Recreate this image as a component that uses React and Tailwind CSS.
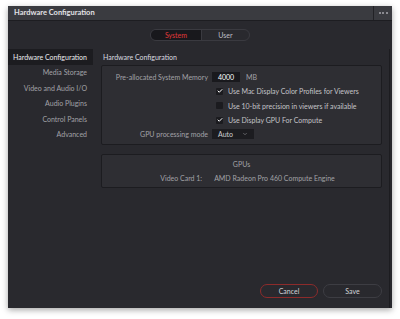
import { Check, ChevronDown } from "lucide-react"

const navItems = [
  "Hardware Configuration",
  "Media Storage",
  "Video and Audio I/O",
  "Audio Plugins",
  "Control Panels",
  "Advanced",
]

const CheckRow = ({ checked, label }) => (
  <div className="flex items-center h-[14.5px]">
    <div className="w-[7px] h-[7px] rounded-[1px] bg-[#1b1b1f] flex items-center justify-center">
      {checked && <Check className="w-[6px] h-[6px] text-white" strokeWidth={4} />}
    </div>
    <span className="ml-[5px] text-[#c4c4c8]">{label}</span>
  </div>
)

export default function App() {
  return (
    <div
      className="w-[400px] h-[319px] bg-white pt-[6px] pl-[8px] overflow-hidden"
      style={{ fontFamily: "Lato, 'Liberation Sans', sans-serif" }}
    >
      <div className="w-[384px] h-[302px] bg-[#29292e] flex flex-col shadow-[0_2px_6px_rgba(0,0,0,0.35)] text-[7px]">
        {/* Title bar */}
        <div className="h-[15px] flex bg-[#3a3b40] border-b border-[#1d1d21]">
          <div className="flex-1 flex items-center pl-[6px] text-[7.5px] font-bold text-[#e2e2e6]">
            Hardware Configuration
          </div>
          <div className="w-[19px] border-l border-[#222226] flex items-center justify-center gap-[1.5px]">
            <span className="w-[2px] h-[2px] bg-[#8a8a90]" />
            <span className="w-[2px] h-[2px] bg-[#8a8a90]" />
            <span className="w-[2px] h-[2px] bg-[#8a8a90]" />
          </div>
        </div>

        {/* Tabs */}
        <div className="flex justify-center pt-[8px]">
          <div className="flex w-[100px] h-[12px] rounded-full border border-[#3a3a40] overflow-hidden">
            <div className="w-[50px] bg-[#18181c] flex items-center justify-center text-[#e0393a]">System</div>
            <div className="flex-1 flex items-center justify-center text-[#bfbfc4] border-l border-[#3a3a40]">User</div>
          </div>
        </div>

        <div className="flex flex-1 pt-[8px]">
          {/* Sidebar */}
          <nav className="w-[85px] flex flex-col">
            {navItems.map((item, i) => (
              <div
                key={item}
                className={`h-[15.5px] flex items-center justify-end pr-[6px] ${
                  i === 0 ? "bg-[#1c1c20] text-[#ececf0]" : "text-[#a2a2a7]"
                }`}
              >
                {item}
              </div>
            ))}
          </nav>

          {/* Content */}
          <div className="flex-1 ml-[2px] mr-[2px] border-r border-[#1c1c20] flex flex-col pl-[6px] pr-[7px]">
            <div className="h-[16px] flex items-center pt-[1px] pl-[2px] text-[#dcdce0]">Hardware Configuration</div>
            <div className="h-[80px] bg-[#2e2e33] border border-[#1c1c20] rounded-[2px] pt-[5px] flex flex-col">
              <div className="flex items-center h-[12px]">
                <span className="w-[110px] text-right pr-[4px] text-[#a2a2a7]">Pre-allocated System Memory</span>
                <div className="w-[28px] h-[10px] bg-[#19191d] flex items-center justify-center text-white">4000</div>
                <span className="ml-[6px] text-[#a2a2a7]">MB</span>
              </div>
              <div className="pl-[114px] pt-[1px]">
                <CheckRow checked label="Use Mac Display Color Profiles for Viewers" />
                <CheckRow label="Use 10-bit precision in viewers if available" />
                <CheckRow checked label="Use Display GPU For Compute" />
              </div>
              <div className="flex items-center h-[13px]">
                <span className="w-[110px] text-right pr-[4px] text-[#a2a2a7]">GPU processing mode</span>
                <div className="w-[42px] h-[10px] bg-[#1c1c20] flex items-center justify-between pl-[6px] pr-[6px] text-[#d0d0d4]">
                  <span>Auto</span>
                  <ChevronDown className="w-[6px] h-[6px] text-[#a2a2a7]" strokeWidth={2} />
                </div>
              </div>
            </div>

            <div className="mt-[9px] h-[34px] bg-[#2e2e33] border border-[#1c1c20] rounded-[2px] flex flex-col items-center justify-center gap-[4px]">
              <span className="text-[#a2a2a7]">GPUs</span>
              <div className="flex text-[#a2a2a7] pl-[12px]">
                <span className="mr-[12px]">Video Card 1:</span>
                <span>AMD Radeon Pro 460 Compute Engine</span>
              </div>
            </div>

            <div className="flex-1" />
            <div className="flex justify-end gap-[5px] pb-[10px]">
              <button className="w-[58px] h-[14px] rounded-full border border-[#8c2b2b] text-[#d4d4d8] flex items-center justify-center">
                Cancel
              </button>
              <button className="w-[59px] h-[14px] rounded-full border border-[#3d3d43] text-[#d4d4d8] flex items-center justify-center">
                Save
              </button>
            </div>
          </div>
        </div>
      </div>
    </div>
  )
}
